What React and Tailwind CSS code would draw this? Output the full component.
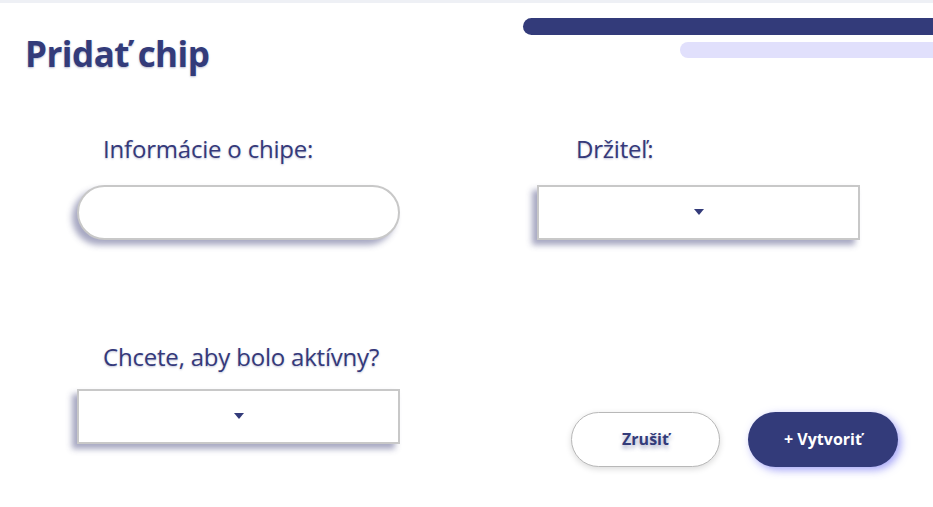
import { useState } from 'react';

const font = { fontFamily: '"Open Sans", "Noto Sans", sans-serif' };

function Arrow() {
  return (
    <svg width="10" height="6" viewBox="0 0 10 6" className="text-[#333b7a]">
      <path d="M0 0 L10 0 L5 6 Z" fill="currentColor" />
    </svg>
  );
}

function Select() {
  return (
    <div className="w-[323px] h-[55px] bg-white border-2 border-[#c8c8c8] shadow-[-5px_5px_6px_rgba(60,62,120,0.45)] flex items-center justify-center">
      <Arrow />
    </div>
  );
}

const labelCls =
  'block text-[24px] leading-[32px] tracking-[-0.2px] text-[#35397a] [text-shadow:0_1px_2px_rgba(51,59,122,0.3)]';

export default function App() {
  const [info, setInfo] = useState('');

  return (
    <div className="w-[933px] h-[507px] bg-white overflow-hidden text-[#333b7a]" style={font}>
      <div className="h-[3px] bg-[#eef0f5]" />
      <div className="flex justify-between">
        <h1 className="pl-[25px] pt-[25px] text-[35px] font-bold tracking-[-0.5px] [text-shadow:0_1px_2px_rgba(51,59,122,0.35)]">
          Pridať chip
        </h1>
        <div className="flex flex-col items-end pt-[15px]">
          <div className="w-[410px] h-[17px] bg-[#333b7a] rounded-l-full" />
          <div className="w-[253px] h-[16px] bg-[#e1e0fc] rounded-l-full mt-[7px]" />
        </div>
      </div>

      <div className="grid grid-cols-[323px_323px] gap-x-[137px] pl-[77px] mt-[52px]">
        <div>
          <label className={`${labelCls} pl-[26px]`}>Informácie o chipe:</label>
          <input
            value={info}
            onChange={(e) => setInfo(e.target.value)}
            className="mt-[20px] w-[323px] h-[55px] rounded-full bg-white border-2 border-[#c8c8c8] shadow-[-5px_5px_6px_rgba(60,62,120,0.45)] outline-none px-6"
          />
        </div>
        <div>
          <label className={`${labelCls} pl-[39px]`}>Držiteľ:</label>
          <div className="mt-[20px]">
            <Select />
          </div>
        </div>

        <div className="mt-[101px]">
          <label className={`${labelCls} pl-[26px]`}>Chcete, aby bolo aktívny?</label>
          <div className="mt-[16px]">
            <Select />
          </div>
        </div>
        <div className="flex items-end gap-[28px] pl-[34px] -mb-[23px]">
          <button className="shrink-0 w-[149px] h-[55px] rounded-full bg-white border border-[#b8b8b8] shadow-[0_2px_6px_rgba(0,0,0,0.15)] text-[16px] font-bold text-[#333b7a] [text-shadow:0_3px_4px_rgba(51,59,122,0.45)]">
            Zrušiť
          </button>
          <button className="shrink-0 w-[150px] h-[55px] rounded-full bg-[#333b7a] shadow-[3px_3px_8px_rgba(90,90,240,0.55)] text-[16px] font-bold text-white">
            + Vytvoriť
          </button>
        </div>
      </div>
    </div>
  );
}
